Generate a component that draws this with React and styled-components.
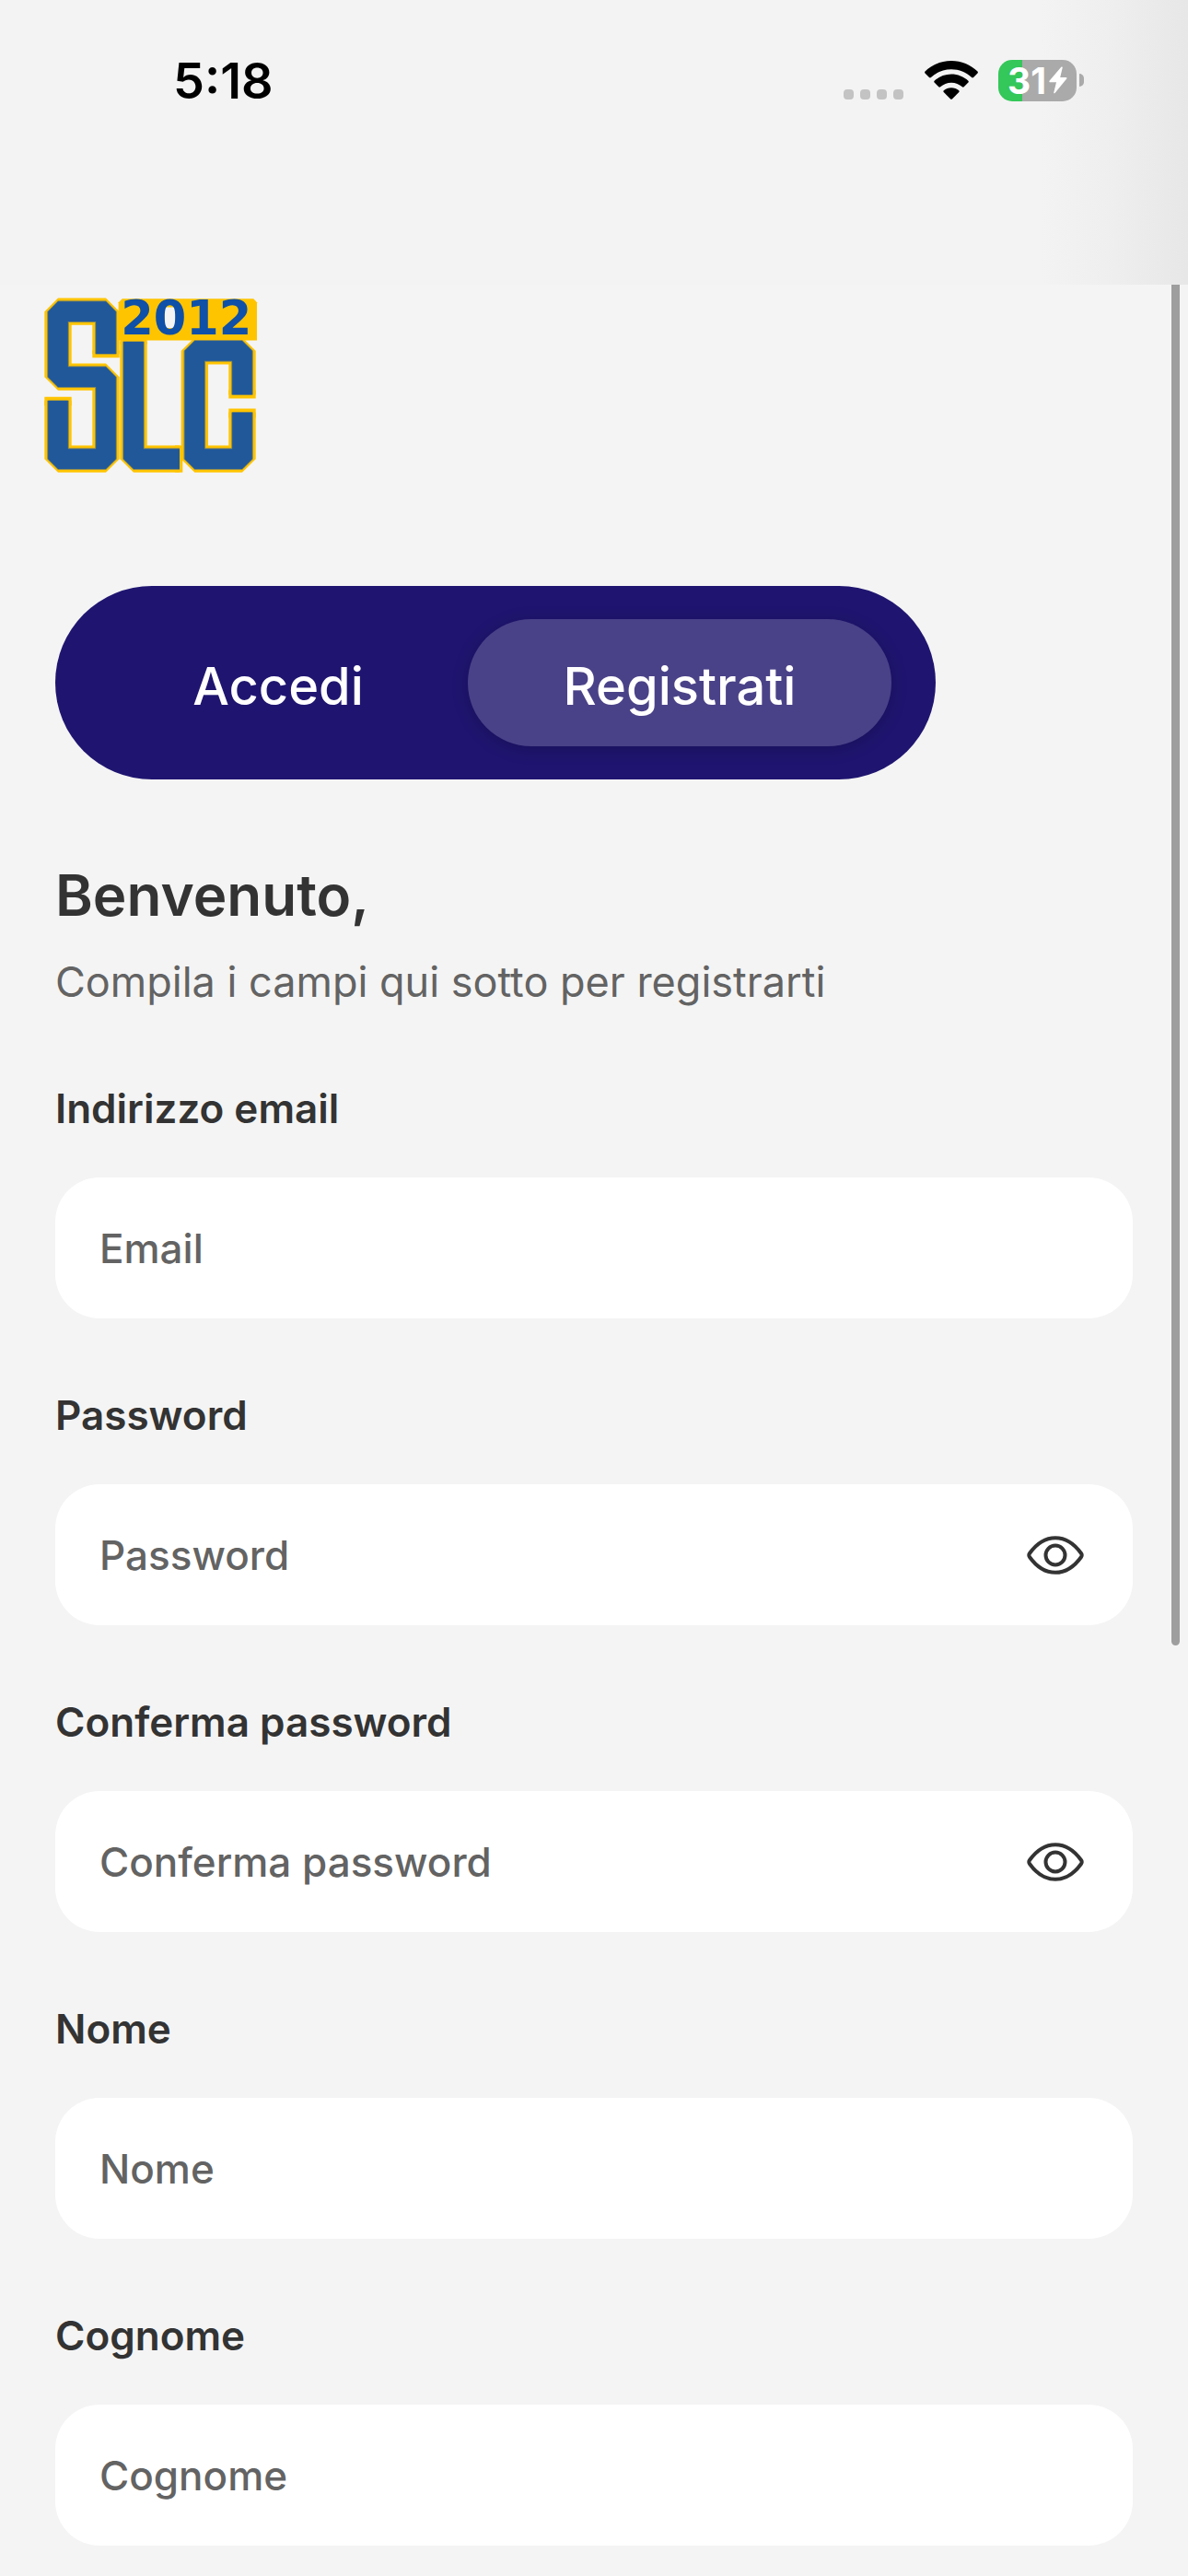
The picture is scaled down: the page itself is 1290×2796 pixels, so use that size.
import React from 'react'
import styled, { createGlobalStyle } from 'styled-components'

const FIELDS = [
  { id: 'email', label: 'Indirizzo email', placeholder: 'Email', type: 'email' },
  { id: 'password', label: 'Password', placeholder: 'Password', type: 'password' },
  { id: 'confirm', label: 'Conferma password', placeholder: 'Conferma password', type: 'password' },
  { id: 'name', label: 'Nome', placeholder: 'Nome', type: 'text' },
  { id: 'surname', label: 'Cognome', placeholder: 'Cognome', type: 'text' },
]

const WifiIcon = () => (
  <svg width="58" height="43" viewBox="0 0 58 43" aria-hidden="true">
    <path d="M29 0C18 0 8 4.300 0.500 11.500Q-0.300 12.500 0.500 13.400L5 18Q6 18.800 6.900 18C13 12.300 20.500 9.200 29 9.200S45 12.300 51.100 18Q52 18.800 53 18L57.500 13.400Q58.300 12.500 57.500 11.500C50 4.300 40 0 29 0Z" />
    <path d="M29 14.600C22 14.600 15.500 17.200 10.600 21.800Q9.800 22.700 10.600 23.600L15.300 28.300Q16.200 29 17.100 28.300C20.400 25.400 24.500 23.700 29 23.700S37.600 25.400 40.900 28.300Q41.800 29 42.700 28.300L47.400 23.600Q48.200 22.700 47.400 21.800C42.500 17.200 36 14.600 29 14.600Z" />
    <path d="M29 29.200C25.900 29.200 23 30.300 20.700 32.200Q19.900 33.100 20.700 34L28.100 41.400Q29 42.200 29.900 41.400L37.300 34Q38.100 33.100 37.300 32.200C35 30.300 32.100 29.200 29 29.200Z" />
  </svg>
)

const BoltIcon = () => (
  <svg width="20" height="30" viewBox="0 0 20 30" aria-hidden="true">
    <path d="M13.500 0.500Q15 0 14.700 1.500L12.200 12H18.500Q20 12.200 19.200 13.500L6.500 29Q5 30 5.300 28.200L8 17.300H1Q-0.200 17 0.700 15.600Z" fill="#fff" />
  </svg>
)

const EyeIcon = () => (
  <svg width="62" height="42" viewBox="0 0 62 42" fill="none" stroke="#333" strokeWidth="4" aria-hidden="true">
    <path d="M3 19C10.500 8.500 20 2.200 31 2.200S51.500 8.500 59 19Q60.400 21 59 23C51.500 33.500 42 39.800 31 39.800S10.500 33.500 3 23Q1.600 21 3 19Z" strokeLinejoin="round" />
    <circle cx="31" cy="21" r="10.500" />
  </svg>
)

// Ribbon strokes of the club mark, drawn three times: gold rim, soft edge, blue fill
const RIBBONS = [
  'M255 252V114H99V327H255V594H99V404',
  'M345 212V594H495',
  'M699 385V242H544V594H699V442',
]

const LAYERS = [
  { color: '#ffc400', width: 88, cap: 'M255 264V240M99 392V420M345 205V220M480 594H505M699 397V370M699 430V460' },
  { color: '#8b8a55', width: 71 },
  { color: '#20589a', width: 65 },
]

const ClubLogo = () => (
  <Mark width="231" height="189" viewBox="54 72 693 566" role="img" aria-label="SLC 2012">
    <path d="M308 72H736L747 84V208H296V84Z" fill="#ffc400" />
    <rect x="446" y="100" width="38" height="68" fill="#f4f4f4" />
    {LAYERS.map((layer) => (
      <g key={layer.width} fill="none" stroke={layer.color} strokeWidth={layer.width} strokeLinejoin="bevel">
        {RIBBONS.map((d) => <path key={d} d={d} />)}
        {layer.cap && <path d={layer.cap} />}
      </g>
    ))}
    <text
      x="304"
      y="188"
      fill="#0f50a8"
      fontFamily="DejaVu Sans"
      fontWeight="700"
      fontSize="153"
    >
      2012
    </text>
  </Mark>
)

class Register extends React.Component {
  state = { visible: {} }

  toggle(id) {
    this.setState(({ visible }) => ({ visible: { ...visible, [id]: !visible[id] } }))
  }

  renderFields() {
    return FIELDS.map((field) => {
      const secret = field.type === 'password'
      return (
        <Field key={field.id}>
          <Label htmlFor={field.id}>{field.label}</Label>
          <InputBox>
            <Input
              id={field.id}
              type={this.state.visible[field.id] ? 'text' : field.type}
              placeholder={field.placeholder}
            />
            {secret && (
              <EyeButton type="button" aria-label="Mostra password" onClick={() => this.toggle(field.id)}>
                <EyeIcon />
              </EyeButton>
            )}
          </InputBox>
        </Field>
      )
    })
  }

  render() {
    return (
      <Content>
        <Brand>
          <ClubLogo />
        </Brand>
        <Tabs>
          <Tab type="button">Accedi</Tab>
          <Tab type="button" $active>Registrati</Tab>
        </Tabs>
        <Title>Benvenuto,</Title>
        <Subtitle>Compila i campi qui sotto per registrarti</Subtitle>
        <Form>{this.renderFields()}</Form>
        <ScrollThumb />
      </Content>
    )
  }
}

const App = () => (
  <Page>
    <GlobalStyle />
    <Header>
      <StatusBar>
        <Time>5:18</Time>
        <StatusIcons>
          <Dots>
            <Dot />
            <Dot />
            <Dot />
            <Dot />
          </Dots>
          <WifiIcon />
          <BatteryWrapper>
            <Battery>
              31
              <BoltIcon />
            </Battery>
            <BatteryTip />
          </BatteryWrapper>
        </StatusIcons>
      </StatusBar>
    </Header>
    <Register />
  </Page>
)

const GlobalStyle = createGlobalStyle`
  * {
    box-sizing: border-box;
  }
  body {
    margin: 0;
    background: #f4f4f4;
  }
  button, input {
    font-family: inherit;
    border: none;
    outline: none;
    background: transparent;
  }
  svg {
    display: block;
    flex-shrink: 0;
  }
`

const Page = styled.div`
  font-family: Inter, 'Open Sans', sans-serif;
  color: #333;
`

const Header = styled.header`
  height: 309px;
  background: linear-gradient(to left, #e7e7e7, #efefef 90px, #f3f3f3 160px);
`

const StatusBar = styled.div`
  display: flex;
  align-items: center;
  justify-content: space-between;
  height: 174px;
  padding: 0 113px 0 188px;
`

const Time = styled.span`
  font-size: 54px;
  font-weight: 600;
  color: #000;
`

const StatusIcons = styled.div`
  display: flex;
  align-items: center;
`

const Dots = styled.div`
  display: flex;
  align-self: flex-end;
  gap: 7px;
  padding-bottom: 2px;
  margin-right: 23px;
`

const Dot = styled.span`
  width: 11px;
  height: 11px;
  border-radius: 4px;
  background: #c3c3c3;
`

const BatteryWrapper = styled.div`
  display: flex;
  align-items: center;
  gap: 3px;
  margin-left: 22px;
`

const Battery = styled.div`
  display: flex;
  align-items: center;
  justify-content: center;
  gap: 3px;
  width: 85px;
  height: 45px;
  border-radius: 15px;
  background: linear-gradient(to right, #34c759 26px, #aaa 26px);
  color: #fff;
  font-size: 39px;
  font-weight: 700;
`

const BatteryTip = styled.span`
  width: 5px;
  height: 14px;
  border-radius: 0 5px 5px 0;
  background: #aaa;
`

const Content = styled.main`
  position: relative;
  padding: 15px 60px 33px;
`

const Brand = styled.div`
  margin: 0 -12px 123px;
`

const Mark = styled.svg`
  overflow: visible;
`

const Tabs = styled.div`
  display: grid;
  grid-template-columns: 388fr 460fr;
  gap: 12px;
  max-width: 956px;
  height: 210px;
  padding: 36px 48px;
  border-radius: 105px;
  background: #1f1570;
`

const Tab = styled.button`
  padding: 8px 0 0;
  border-radius: 69px;
  color: #fff;
  font-size: 56px;
  font-weight: 500;
  background: ${(props) => (props.$active ? '#4a4288' : 'transparent')};
  box-shadow: ${(props) => (props.$active ? '0 3px 18px rgba(0, 0, 0, 0.2)' : 'none')};
`

const Title = styled.h1`
  margin: 81px 0 17px;
  font-size: 62px;
  line-height: 90px;
  font-weight: 600;
`

const Subtitle = styled.p`
  margin: 0 0 75px;
  font-size: 45px;
  line-height: 63px;
  color: #636363;
`

const Form = styled.form`
  display: flex;
  flex-direction: column;
  gap: 74px;
`

const Field = styled.div`
  display: flex;
  flex-direction: column;
  gap: 43px;
`

const Label = styled.label`
  font-size: 44px;
  line-height: 63px;
  font-weight: 600;
`

const InputBox = styled.div`
  display: flex;
  align-items: center;
  height: 153px;
  padding: 0 53px 0 48px;
  border-radius: 48px;
  background: #fff;
`

const Input = styled.input`
  flex: 1;
  min-width: 0;
  height: 100%;
  padding: 0;
  color: #333;
  font-size: 44px;
  font-weight: 500;

  &::placeholder {
    color: #636363;
    opacity: 1;
  }
`

const EyeButton = styled.button`
  padding: 0;
  cursor: pointer;
`

const ScrollThumb = styled.div`
  position: absolute;
  top: 0;
  right: 9px;
  width: 9px;
  height: 1477px;
  border-radius: 0 0 5px 5px;
  background: #9e9e9e;
`

export default App
